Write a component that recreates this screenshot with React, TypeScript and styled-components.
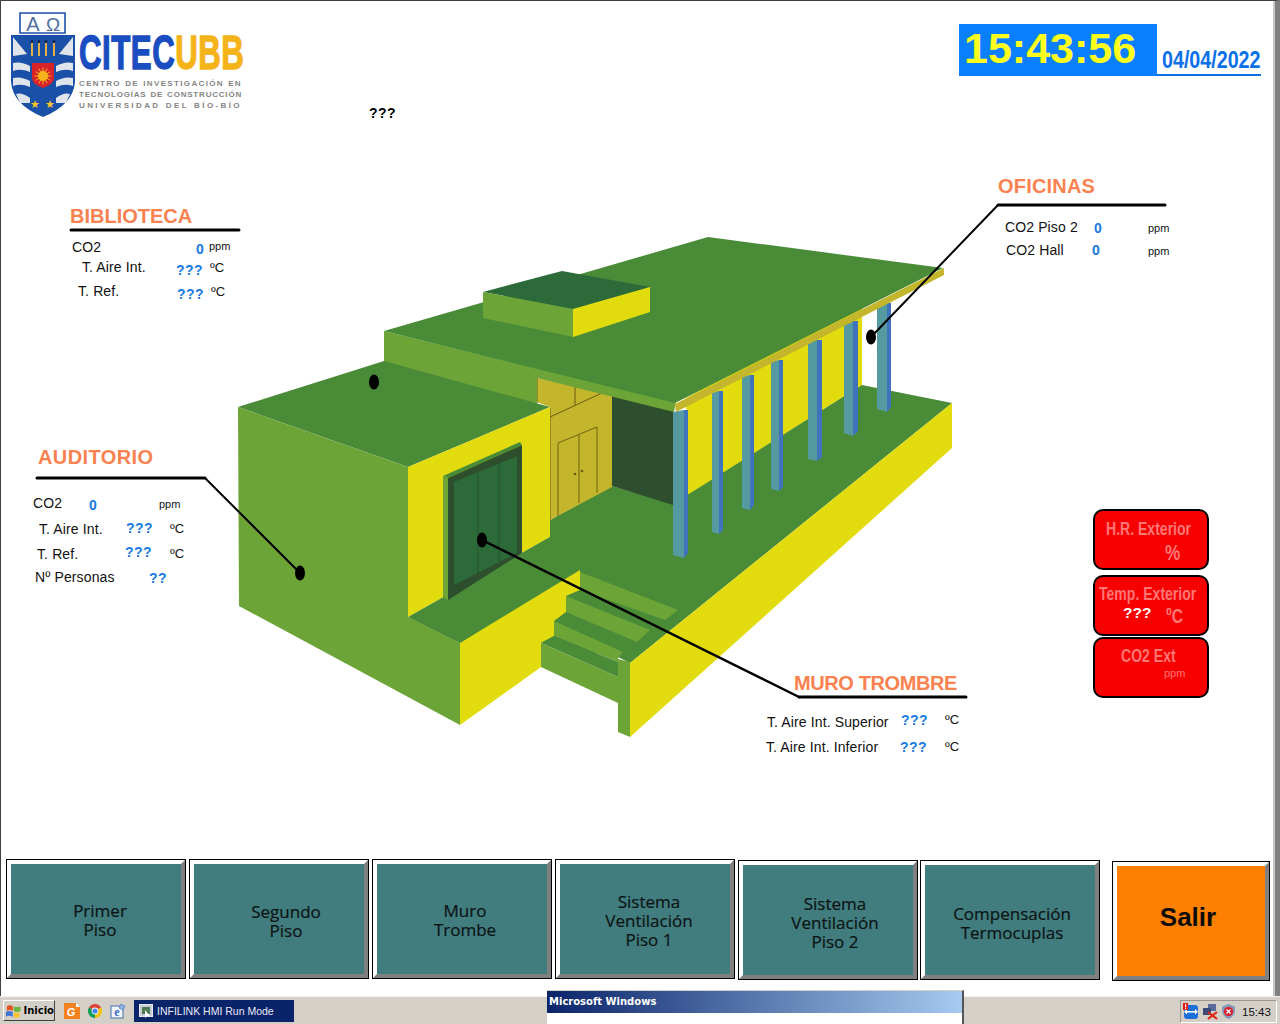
import React from "react";
import styled, { createGlobalStyle } from "styled-components";

const STAGE_LEFT = 1;
const STAGE_TOP = 121;

const GlobalStyle = createGlobalStyle`
  html, body {
    margin: 0;
    padding: 0;
    background: #fff;
    overflow: hidden;
  }
  * { box-sizing: border-box; }
`;

const Desktop = styled.div`
  position: relative;
  width: 1280px;
  height: 1024px;
  display: flex;
  flex-direction: column;
  font-family: "Liberation Sans", Arial, sans-serif;
  color: #000;
  overflow: hidden;
`;
const Screen = styled.main`
  height: 996px;
  display: flex;
  flex-direction: column;
  background: #fff;
  border-top: 1px solid #404040;
  border-left: 1px solid #404040;
  border-right: 5px solid #808080;
  box-shadow: inset -2px 0 0 #c8c8c8;
`;

/* header */
const TopBar = styled.header`
  height: 120px;
  display: flex;
  align-items: flex-start;
`;
const Logo = styled.div`
  display: flex;
  margin: 10px 0 0 9px;
`;
const LogoText = styled.div`
  width: 163px;
  margin-left: 3px;
  padding-top: 17px;
`;
const Brand = styled.div`
  height: 50px;
  font-size: 48px;
  line-height: 49px;
  font-weight: 700;
  white-space: nowrap;
  color: #1a4dc0;
  -webkit-text-stroke: 1.4px currentColor;
  letter-spacing: 0.8px;
  transform: scaleX(0.65);
  transform-origin: left;
  span { color: #f5b31a; }
`;
const BrandLine = styled.div<{ $spacing: number }>`
  height: 11px;
  font-size: 8px;
  line-height: 11px;
  font-weight: 700;
  color: #858585;
  white-space: nowrap;
  letter-spacing: ${(p) => p.$spacing}px;
  text-align: justify;
  text-align-last: justify;
`;
const StatusMark = styled.div`
  margin: 104px 0 0 127px;
  font-size: 14px;
  line-height: 16px;
  font-weight: 700;
  letter-spacing: 0.4px;
`;
const ClockGroup = styled.div`
  display: flex;
  align-items: flex-end;
  margin: 23px 14px 0 auto;
`;
const ClockFace = styled.div`
  width: 198px;
  height: 52px;
  padding-left: 5px;
  background: #0a80ff;
  color: #ffff1e;
  font-size: 43px;
  line-height: 48px;
  font-weight: 700;
  white-space: nowrap;
`;
const DateField = styled.div`
  width: 104px;
  height: 29px;
  padding-left: 5px;
  border-bottom: 2px solid #0a70e8;
  color: #0a70e8;
  font-size: 24px;
  line-height: 26px;
  font-weight: 700;
  white-space: nowrap;
  span {
    display: inline-block;
    transform: scaleX(0.82);
    transform-origin: left;
  }
`;

/* synoptic canvas */
const Stage = styled.section`
  position: relative;
  height: 738px;
`;
const Drawing = styled.svg`
  position: absolute;
  left: 0;
  top: 0;
  display: block;
`;
const Placed = styled.div<{ $x: number; $y: number }>`
  position: absolute;
  left: ${(p) => p.$x - STAGE_LEFT}px;
  top: ${(p) => p.$y - STAGE_TOP - 8}px;
  line-height: 16px;
  white-space: nowrap;
`;
const AreaTitle = styled(Placed)<{ $spacing: number }>`
  font-size: 20px;
  font-weight: 700;
  letter-spacing: ${(p) => p.$spacing}px;
  color: #f98250;
`;
const ReadingLabel = styled(Placed)`
  font-size: 14px;
  letter-spacing: 0.12px;
  color: #111;
`;
const ReadingValue = styled(Placed)`
  font-size: 14px;
  font-weight: 700;
  letter-spacing: 0.5px;
  color: #1a7ae0;
`;
const ReadingUnit = styled(Placed)<{ $small?: boolean }>`
  font-size: ${(p) => (p.$small ? 11 : 13)}px;
  color: #111;
`;

/* exterior tiles */
const TileStack = styled.aside`
  position: absolute;
  left: 1092px;
  top: 388px;
  display: flex;
  flex-direction: column;
`;
const Tile = styled.div<{ $gap: number }>`
  width: 116px;
  height: 61px;
  margin-top: ${(p) => p.$gap}px;
  background: #f60000;
  border: 2px solid #000;
  border-radius: 10px;
  display: flex;
  flex-direction: column;
  align-items: flex-start;
`;
const TileText = styled.div<{ $left: number; $top: number; $size?: number }>`
  margin: ${(p) => p.$top}px 0 0 ${(p) => p.$left}px;
  height: 20px;
  font-size: ${(p) => p.$size ?? 18}px;
  line-height: 20px;
  font-weight: 700;
  white-space: nowrap;
  color: #ff7676;
  transform: scaleX(0.78);
  transform-origin: left;
`;
const TileValue = styled.div<{ $left: number; $top: number }>`
  margin: ${(p) => p.$top}px 0 0 ${(p) => p.$left}px;
  font-size: 15.5px;
  line-height: 20px;
  font-weight: 700;
  color: #fff;
`;
const TileUnit = styled.div<{ $left: number; $top: number }>`
  margin: ${(p) => p.$top}px 0 0 ${(p) => p.$left}px;
  font-size: 11px;
  line-height: 12px;
  color: #ff7676;
`;
const TileRow = styled.div`
  display: flex;
  align-items: flex-start;
`;

/* buttons */
const ButtonRow = styled.nav`
  display: flex;
  align-items: flex-start;
  gap: 5px;
  padding: 1px 0 0 6px;
`;
const PanelButton = styled.button<{ $dx?: number; $dy?: number; $top?: number; $pull?: number }>`
  width: 178px;
  height: 118px;
  flex: none;
  margin-top: ${(p) => p.$top ?? 0}px;
  margin-left: ${(p) => -(p.$pull ?? 0)}px;
  padding: ${(p) => (p.$dy ?? 0) * 2}px 0 0 ${(p) => (p.$dx ?? 0) * 2}px;
  background: #417c7e;
  border: 4px solid;
  border-color: #fff #808080 #808080 #fff;
  outline: 1px solid #000;
  color: #0c1414;
  -webkit-text-stroke: 0.2px currentColor;
  font-family: "Open Sans", sans-serif;
  font-size: 17px;
  line-height: 19px;
`;
const ExitButton = styled(PanelButton)`
  width: 156px;
  margin-left: 9px;
  padding: 0 6px 9px 0;
  background: #ff8000;
  color: #0c0c0c;
  -webkit-text-stroke: 0;
  font-family: "Liberation Sans", Arial, sans-serif;
  font-size: 26px;
  font-weight: 700;
  line-height: 30px;
`;

/* windows taskbar */
const Taskbar = styled.footer`
  height: 28px;
  display: flex;
  align-items: flex-start;
  padding: 3px 3px 0 3px;
  background: #d4d0c8;
  border-top: 1px solid #f4f2ee;
`;
const StartButton = styled.div`
  width: 52px;
  height: 21px;
  display: flex;
  align-items: center;
  gap: 1px;
  padding-left: 1px;
  background: #d4d0c8;
  border: 1px solid;
  border-color: #fff #404040 #404040 #fff;
  font-family: "DejaVu Sans", sans-serif;
  font-size: 10px;
  font-weight: 700;
`;
const QuickLaunch = styled.div`
  display: flex;
  align-items: center;
  gap: 7px;
  height: 22px;
  margin-left: 9px;
`;
const TaskButton = styled.div`
  width: 160px;
  height: 22px;
  margin-left: 8px;
  display: flex;
  align-items: center;
  gap: 4px;
  padding-left: 5px;
  background: #0a246a;
  color: #e8e8f8;
  font-size: 10.5px;
  white-space: nowrap;
`;
const Tray = styled.div`
  margin-left: auto;
  width: 97px;
  height: 23px;
  display: flex;
  align-items: center;
  gap: 3px;
  padding-left: 2px;
  border: 1px solid;
  border-color: #9a968e #fff #fff #9a968e;
  font-size: 11.5px;
  color: #111;
`;
const TrayClock = styled.span`
  margin-left: 3px;
`;
const AlertDialog = styled.div`
  position: absolute;
  left: 547px;
  top: 990px;
  width: 417px;
  height: 34px;
  background: #fff;
  border-top: 1px solid #d4d0c8;
  border-right: 2px solid #555;
`;
const DialogTitle = styled.div`
  height: 22px;
  padding: 5px 0 0 2px;
  background: linear-gradient(90deg, #0a246a, #a6caf0);
  color: #fff;
  font-family: "DejaVu Sans", sans-serif;
  font-size: 10px;
  font-weight: 700;
`;

/* building */
const pillars = [
  [673, 684, 688, 412, 410, 555, 558, 553],
  [712, 719, 723, 393, 391, 532, 534, 530],
  [742, 750, 754, 377, 375, 508, 510, 505],
  [771, 779, 783, 362, 360, 489, 491, 487],
  [808, 817, 822, 342, 340, 459, 461, 457],
  [844, 853, 858, 323, 321, 433, 436, 431],
  [877, 887, 891, 305, 303, 409, 412, 407],
];
const C = {
  roof: "#4a8b38",
  light: "#6ca437",
  yellow: "#e2dc0e",
  olive: "#c3b52c",
  dark: "#2d4f2d",
  door: "#2d6a3a",
  teal: "#549aa0",
  blue: "#3f74bc",
  line: "#6b5a10",
};

const Building = () => (
  <Drawing width={1274} height={738} viewBox={`${STAGE_LEFT} ${STAGE_TOP} 1274 738`}>
    {/* long wall, floor and rear rooms */}
    <polygon fill={C.yellow} points="686,398 862,300 862,385 688,495" />
    <polygon
      fill={C.roof}
      points="410,618 550,537 550,520 612,486 673,504 862,385 952,403 630,663 618,657 541,643 460,643"
    />
    <polygon fill={C.dark} points="612,395 673,410 673,505 612,486" />
    <polygon fill={C.olive} points="537,378 612,395 612,487 550,520 550,407 537,402" />
    <g stroke={C.line} strokeWidth="1" fill="none">
      <path d="M537 378V403M575 385V405M550 417L602 393" />
      <path d="M558 516V443L597 427V493M579 435V503M550 520V408" strokeOpacity="0.9" />
    </g>
    <circle cx="575" cy="474" r="1.3" fill={C.line} />
    <circle cx="582" cy="471" r="1.3" fill={C.line} />

    {/* left block */}
    <polygon fill={C.light} points="384,331 676,402 674,412 537,378 537,410 384,369" />
    <polygon fill={C.roof} points="238,407 384,361 550,407 408,467" />
    <polygon fill={C.light} points="238,407 408,467 408,617 460,643 460,725 239,606" />
    <polygon fill={C.yellow} points="408,467 550,407 550,537 408,617" />
    <polygon fill={C.roof} points="408,617 550,537 580,572 460,643" />

    {/* auditorium door */}
    <polygon fill={C.roof} points="443,476 520,442 522,445 448,478" />
    <polygon fill={C.light} points="443,476 448,478 448,600 443,598" />
    <polygon fill={C.dark} points="448,478 522,445 522,553 448,600" />
    <polygon fill={C.door} points="454,482 517,456 517,553 454,585" />
    <path d="M478 473V573M499 463V562" stroke={C.dark} strokeWidth="1" />

    {/* steps */}
    <polygon fill={C.yellow} points="460,643 580,570 580,590 566,596 566,612 554,621 554,636 541,643 541,667 460,725" />
    <polygon fill={C.light} points="580,572 678,610 665,620 580,590" />
    <polygon fill={C.light} points="566,596 650,630 637,642 566,612" />
    <polygon fill={C.light} points="554,621 623,652 618,658 618,662 554,636" />
    <polygon fill={C.roof} points="541,643 554,636 618,662 618,677" />
    <polygon fill={C.light} points="541,643 618,677 618,703 541,667" />
    <polygon fill={C.light} points="618,659 630,662 630,737 618,732" />
    <polygon fill={C.yellow} points="630,663 952,403 952,448 630,737" />

    {/* columns */}
    {pillars.map(([a, b, c, t1, t2, b1, b2, b3]) => (
      <g key={a}>
        <polygon fill={C.teal} points={`${a},${t1} ${b},${t2} ${b},${b2} ${a},${b1}`} />
        <polygon fill={C.blue} points={`${b},${t2} ${c},${t2} ${c},${b3} ${b},${b2}`} />
      </g>
    ))}

    {/* main roof */}
    <polygon fill={C.roof} points="384,331 708,237 943,268 675,403" />
    <polygon fill={C.olive} points="675,404 944,268 944,275 676,412" />
    <polygon fill={C.door} points="483,292 562,271 650,287 573,309" />
    <polygon fill={C.light} points="483,292 573,309 573,337 483,318" />
    <polygon fill={C.yellow} points="573,309 650,287 650,312 573,337" />

    {/* leaders */}
    <g fill="none" stroke="#000" strokeLinecap="round" strokeLinejoin="round">
      <path d="M71 230H239" strokeWidth="3" />
      <path d="M37 478H205" strokeWidth="3" />
      <path d="M205 478L300 573" strokeWidth="2" />
      <path d="M998 205H1165" strokeWidth="3" />
      <path d="M998 205L871 337" strokeWidth="2" />
      <path d="M966 697H799" strokeWidth="3" />
      <path d="M799 697L482 540" strokeWidth="2.5" />
    </g>
    <ellipse cx="374" cy="382" rx="5" ry="7.5" />
    <ellipse cx="300" cy="573" rx="5" ry="7.5" />
    <ellipse cx="482" cy="540" rx="5" ry="7.5" />
    <ellipse cx="871" cy="337" rx="5" ry="7.5" />
  </Drawing>
);

const Shield = () => (
  <svg width="66" height="107" viewBox="9 11 66 107">
    <path d="M19 13H64V33H19Z" fill="#fff" stroke="#1a50a8" strokeWidth="1.6" />
    <text x="32" y="31" textAnchor="middle" fontFamily="Liberation Sans" fontSize="20" fill="#5070a0">Α</text>
    <text x="52" y="31" textAnchor="middle" fontFamily="Liberation Sans" fontSize="19" fill="#5070a0">Ω</text>
    <path d="M10 35H74V82Q72 105 42 117Q12 105 10 82Z" fill="#1a50a8" />
    <path d="M12 37L26 54L12 56Z M72 37L58 54L72 56Z" fill="#dfe4ea" />
    <path
      d="M12 63Q20 61 29 66V72Q20 68 12 71Z M12 78Q20 76 29 81V87Q20 83 12 86Z M15 94Q21 92 29 98V103Q24 103 19 103Z
         M72 63Q64 61 55 66V72Q64 68 72 71Z M72 78Q64 76 55 81V87Q64 83 72 86Z M69 94Q63 92 55 98V103Q60 103 65 103Z"
      fill="#dfe4ea"
    />
    <path d="M31 63H53V78Q53 84 42 88Q31 84 31 78Z" fill="#d8232a" />
    <g stroke="#f7b21c" strokeWidth="1">
      {Array.from({ length: 12 }, (_, i) => {
        const a = (i * Math.PI) / 6;
        return (
          <line
            key={i}
            x1={42}
            y1={76}
            x2={42 + 8.5 * Math.cos(a)}
            y2={76 + 8.5 * Math.sin(a)}
          />
        );
      })}
    </g>
    <circle cx="42" cy="76" r="5" fill="#f7b21c" />
    <g stroke="#e3b04a" strokeWidth="2">
      <path d="M31 43V56M38 43V56M45 43V56M53 43V56" />
    </g>
    <g fill="#12274f">
      <circle cx="31" cy="41.5" r="1.4" />
      <circle cx="38" cy="41.5" r="1.4" />
      <circle cx="45" cy="41.5" r="1.4" />
      <circle cx="53" cy="41.5" r="1.4" />
    </g>
    <text x="34" y="108" textAnchor="middle" fontFamily="DejaVu Sans" fontSize="11" fill="#f7c22c">★</text>
    <text x="49" y="108" textAnchor="middle" fontFamily="DejaVu Sans" fontSize="11" fill="#f7c22c">★</text>
  </svg>
);

const WindowsFlag = () => (
  <svg width="18" height="16" viewBox="0 0 18 16">
    <path d="M2 3Q5 1 8 3V8Q5 6 2 8Z" fill="#e2501f" />
    <path d="M9 3Q12 5 16 3V8Q12 10 9 8Z" fill="#6cb33f" />
    <path d="M1 9Q4 7 8 9V14Q4 12 1 14Z" fill="#3f74d8" />
    <path d="M9 9Q12 11 15 9V14Q12 16 9 14Z" fill="#f7c22c" />
  </svg>
);
const GoIcon = () => (
  <svg width="16" height="16" viewBox="0 0 16 16">
    <path d="M0 0H12L16 4V16H0Z" fill="#f58220" />
    <path d="M12 0L16 4H12Z" fill="#fff" />
    <text x="7" y="13" textAnchor="middle" fontFamily="Liberation Sans" fontWeight="700" fontStyle="italic" fontSize="11" fill="#fff">G</text>
  </svg>
);
const ChromeIcon = () => (
  <svg width="16" height="16" viewBox="0 0 16 16">
    <path d="M8 1A7 7 0 0 1 14.1 4.5L8 8L1.9 4.5A7 7 0 0 1 8 1Z" fill="#db4437" />
    <path d="M14.1 4.5A7 7 0 0 1 8 15L8 8Z" fill="#f4c20d" />
    <path d="M8 15A7 7 0 0 1 1.9 4.5L8 8Z" fill="#0f9d58" />
    <circle cx="8" cy="8" r="3.4" fill="#fff" />
    <circle cx="8" cy="8" r="2.6" fill="#4285f4" />
  </svg>
);
const DesktopIcon = () => (
  <svg width="16" height="16" viewBox="0 0 16 16">
    <rect x="1" y="3" width="12" height="12" fill="#f4f6fb" stroke="#3f6fb0" />
    <path d="M11 1L15 3L13 7L9 5Z" fill="#8fb4e6" stroke="#3f6fb0" strokeWidth="0.6" />
    <text x="7" y="13" textAnchor="middle" fontFamily="Liberation Serif" fontWeight="700" fontSize="12" fill="#2f69c2">e</text>
  </svg>
);
const InfilinkIcon = () => (
  <svg width="14" height="16" viewBox="0 0 14 16">
    <rect x="0.5" y="1.5" width="13" height="12" fill="#c8ccd8" stroke="#e8e8f0" />
    <rect x="3" y="4" width="8" height="7" fill="#4e7a52" />
    <path d="M6 7L6 15L8 13L11 13Z" fill="#fff" />
  </svg>
);
const RemoteIcon = () => (
  <svg width="16" height="17" viewBox="0 0 16 17">
    <rect x="1" y="2" width="14" height="14" rx="3" fill="#1d6fd8" />
    <rect x="2.5" y="8" width="11" height="1.6" fill="#fff" />
    <path d="M4 6L1 8.8L4 11.5ZM12 6L15 8.8L12 11.5Z" fill="#fff" />
    <rect x="0" y="0" width="5" height="7" fill="#e01818" />
    <rect x="2" y="1" width="1.2" height="3.4" fill="#fff" />
    <rect x="2" y="5" width="1.2" height="1.2" fill="#fff" />
  </svg>
);
const NetworkIcon = () => (
  <svg width="16" height="17" viewBox="0 0 16 17">
    <rect x="6" y="1" width="8" height="7" fill="#5a6a9a" />
    <rect x="1" y="5" width="8" height="7" fill="#3c4a78" />
    <path d="M6 9L15 16M15 9L6 16" stroke="#e02818" strokeWidth="2.2" />
  </svg>
);
const ShieldIcon = () => (
  <svg width="15" height="17" viewBox="0 0 15 17">
    <path d="M7.5 1L14 3.5V9Q13 14 7.5 16Q2 14 1 9V3.5Z" fill="#8a98b8" />
    <circle cx="7.5" cy="8.5" r="4.6" fill="#d81e2c" />
    <path d="M5.5 6.5L9.5 10.5M9.5 6.5L5.5 10.5" stroke="#fff" strokeWidth="1.4" />
  </svg>
);

const App = () => (
  <Desktop>
    <GlobalStyle />
    <Screen>
      <TopBar>
        <Logo>
          <Shield />
          <LogoText>
            <Brand>
              CITEC<span>UBB</span>
            </Brand>
            <BrandLine $spacing={1.35}>CENTRO DE INVESTIGACIÓN EN</BrandLine>
            <BrandLine $spacing={0.8}>TECNOLOGÍAS DE CONSTRUCCIÓN</BrandLine>
            <BrandLine $spacing={2.4}>UNIVERSIDAD DEL BÍO-BÍO</BrandLine>
          </LogoText>
        </Logo>
        <StatusMark>???</StatusMark>
        <ClockGroup>
          <ClockFace>15:43:56</ClockFace>
          <DateField>
            <span>04/04/2022</span>
          </DateField>
        </ClockGroup>
      </TopBar>

      <Stage>
        <Building />

        <AreaTitle $spacing={0} $x={70} $y={216}>BIBLIOTECA</AreaTitle>
        <ReadingLabel $x={72} $y={247}>CO2</ReadingLabel>
        <ReadingValue $x={196} $y={249}>0</ReadingValue>
        <ReadingUnit $small $x={209} $y={246}>ppm</ReadingUnit>
        <ReadingLabel $x={82} $y={267}>T. Aire Int.</ReadingLabel>
        <ReadingValue $x={176} $y={270}>???</ReadingValue>
        <ReadingUnit $x={210} $y={268}>ºC</ReadingUnit>
        <ReadingLabel $x={78} $y={291}>T. Ref.</ReadingLabel>
        <ReadingValue $x={177} $y={294}>???</ReadingValue>
        <ReadingUnit $x={211} $y={292}>ºC</ReadingUnit>

        <AreaTitle $spacing={0.4} $x={38} $y={457}>AUDITORIO</AreaTitle>
        <ReadingLabel $x={33} $y={503}>CO2</ReadingLabel>
        <ReadingValue $x={89} $y={505}>0</ReadingValue>
        <ReadingUnit $small $x={159} $y={504}>ppm</ReadingUnit>
        <ReadingLabel $x={39} $y={529}>T. Aire Int.</ReadingLabel>
        <ReadingValue $x={126} $y={528}>???</ReadingValue>
        <ReadingUnit $x={170} $y={529}>ºC</ReadingUnit>
        <ReadingLabel $x={37} $y={554}>T. Ref.</ReadingLabel>
        <ReadingValue $x={125} $y={552}>???</ReadingValue>
        <ReadingUnit $x={170} $y={554}>ºC</ReadingUnit>
        <ReadingLabel $x={35} $y={577}>Nº Personas</ReadingLabel>
        <ReadingValue $x={149} $y={578}>??</ReadingValue>

        <AreaTitle $spacing={0.2} $x={998} $y={186}>OFICINAS</AreaTitle>
        <ReadingLabel $x={1005} $y={227}>CO2 Piso 2</ReadingLabel>
        <ReadingValue $x={1094} $y={228}>0</ReadingValue>
        <ReadingUnit $small $x={1148} $y={228}>ppm</ReadingUnit>
        <ReadingLabel $x={1006} $y={250}>CO2 Hall</ReadingLabel>
        <ReadingValue $x={1092} $y={250}>0</ReadingValue>
        <ReadingUnit $small $x={1148} $y={251}>ppm</ReadingUnit>

        <AreaTitle $spacing={-0.4} $x={794} $y={683}>MURO TROMBRE</AreaTitle>
        <ReadingLabel $x={767} $y={722}>T. Aire Int. Superior</ReadingLabel>
        <ReadingValue $x={901} $y={720}>???</ReadingValue>
        <ReadingUnit $x={945} $y={720}>ºC</ReadingUnit>
        <ReadingLabel $x={766} $y={747}>T. Aire Int. Inferior</ReadingLabel>
        <ReadingValue $x={900} $y={747}>???</ReadingValue>
        <ReadingUnit $x={945} $y={747}>ºC</ReadingUnit>

        <TileStack>
          <Tile $gap={0}>
            <TileText $left={11} $top={8}>H.R. Exterior</TileText>
            <TileText $size={22} $left={70} $top={4}>%</TileText>
          </Tile>
          <Tile $gap={5}>
            <TileText $left={4} $top={7}>Temp. Exterior</TileText>
            <TileRow>
              <TileValue $left={28} $top={-1}>???</TileValue>
              <TileText $size={20} $left={15} $top={2}>ºC</TileText>
            </TileRow>
          </Tile>
          <Tile $gap={1}>
            <TileText $left={26} $top={7}>CO2 Ext</TileText>
            <TileUnit $left={69} $top={1}>ppm</TileUnit>
          </Tile>
        </TileStack>
      </Stage>

      <ButtonRow>
        <PanelButton $dx={4} $dy={1}>Primer<br />Piso</PanelButton>
        <PanelButton $dx={7} $dy={2}>Segundo<br />Piso</PanelButton>
        <PanelButton $dx={3} $dy={1}>Muro<br />Trombe</PanelButton>
        <PanelButton $dx={4} $dy={1}>Sistema<br />Ventilación<br />Piso 1</PanelButton>
        <PanelButton $dx={7} $dy={2.5} $top={1}>Sistema<br />Ventilación<br />Piso 2</PanelButton>
        <PanelButton $dx={2} $dy={3} $top={1} $pull={1}>Compensación<br />Termocuplas</PanelButton>
        <ExitButton $top={2}>Salir</ExitButton>
      </ButtonRow>
    </Screen>

    <Taskbar>
      <StartButton>
        <WindowsFlag />
        Inicio
      </StartButton>
      <QuickLaunch>
        <GoIcon />
        <ChromeIcon />
        <DesktopIcon />
      </QuickLaunch>
      <TaskButton>
        <InfilinkIcon />
        INFILINK HMI Run Mode
      </TaskButton>
      <Tray>
        <RemoteIcon />
        <NetworkIcon />
        <ShieldIcon />
        <TrayClock>15:43</TrayClock>
      </Tray>
    </Taskbar>

    <AlertDialog>
      <DialogTitle>Microsoft Windows</DialogTitle>
    </AlertDialog>
  </Desktop>
);

export default App;
